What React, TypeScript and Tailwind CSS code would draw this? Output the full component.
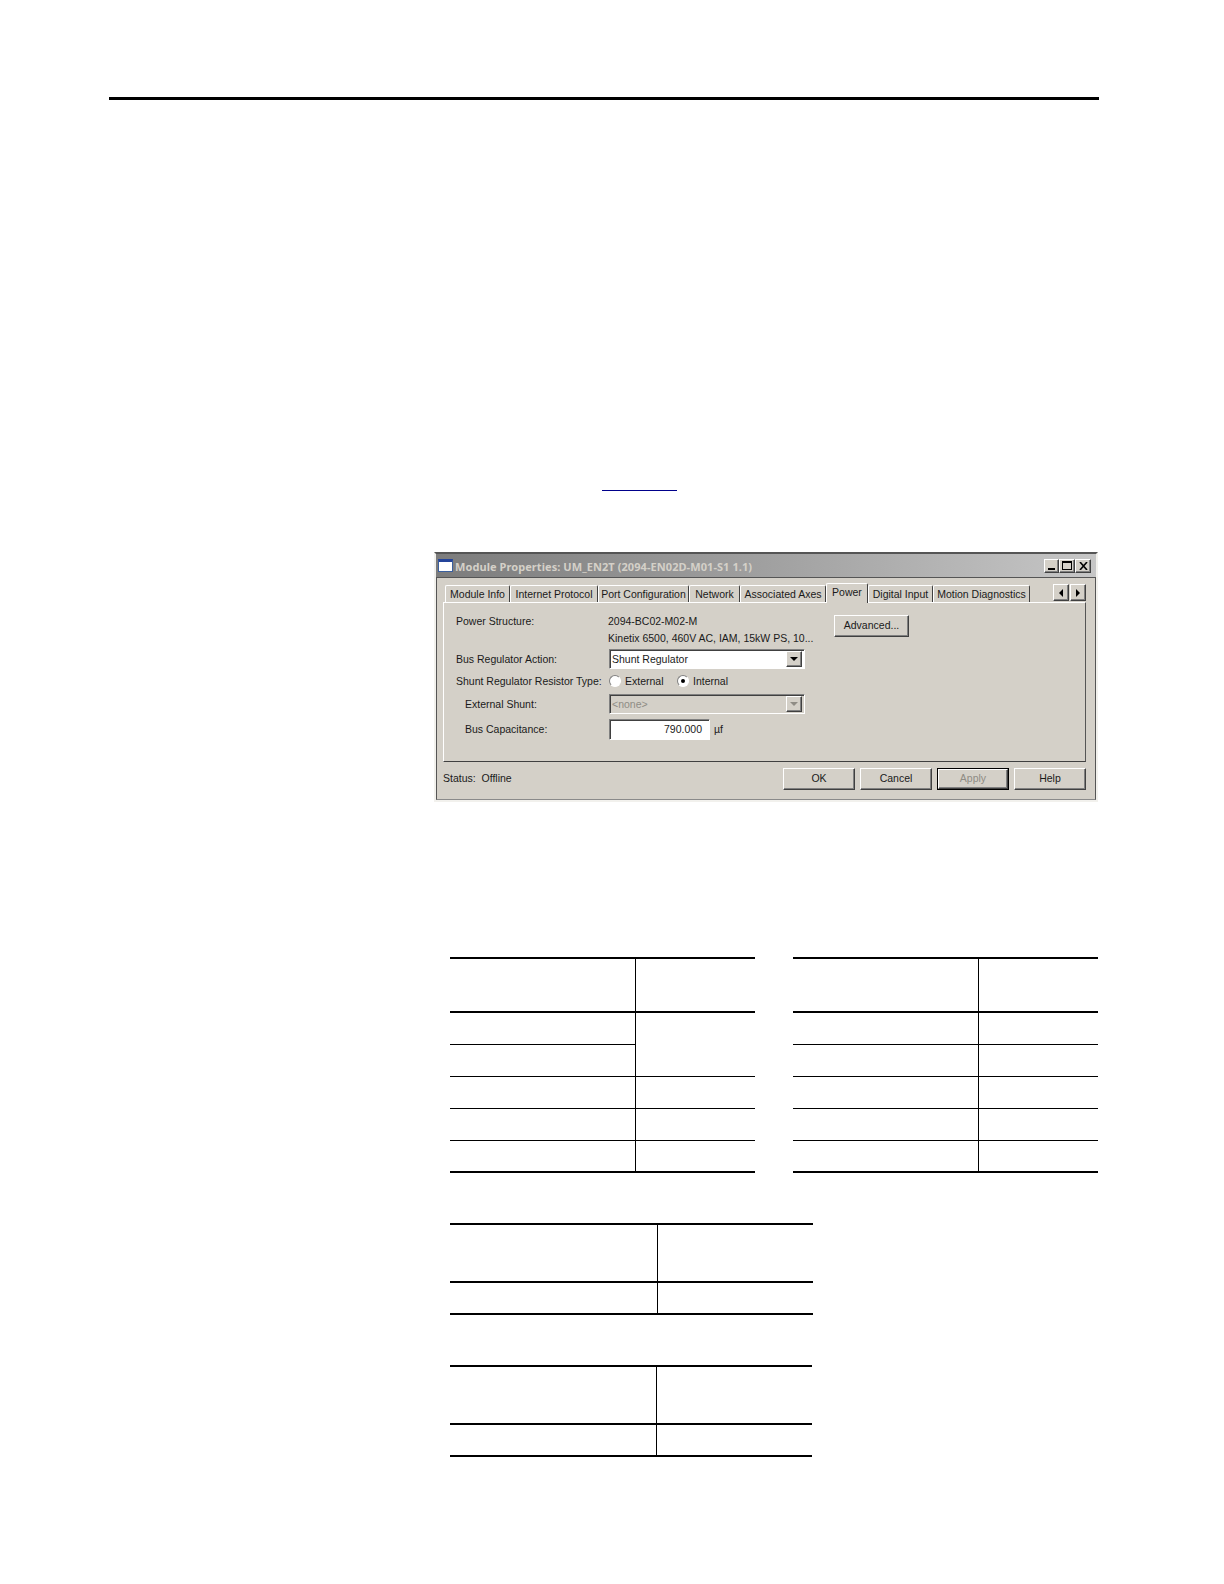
import React from "react";

const raised = "border border-t-white border-l-white border-r-[#404040] border-b-[#404040] shadow-[inset_-1px_-1px_0_#808080]";
const sunken = "border border-t-[#808080] border-l-[#808080] border-r-white border-b-white shadow-[inset_1px_1px_0_#404040]";

function Tri({ dir, color = "#000" }: { dir: "l" | "r" | "d"; color?: string }) {
  const pts = dir === "l" ? "5,0 5,8 1,4" : dir === "r" ? "1,0 1,8 5,4" : "0,1 8,1 4,5";
  const w = dir === "d" ? 8 : 6;
  const h = dir === "d" ? 6 : 8;
  return (
    <svg width={w} height={h} viewBox={`0 0 ${w} ${h}`}>
      <polygon points={pts} fill={color} />
    </svg>
  );
}

function Tab({ label, w, active }: { label: string; w: string; active?: boolean }) {
  return (
    <div
      className={`${w} ${
        active ? "h-[20px] -mb-px bg-[#d4d0c8] z-10 pb-[2px]" : "h-[17px] pt-[1px]"
      } flex items-center justify-center border-t border-l border-r border-t-white border-l-white border-r-[#404040] rounded-t-[2px] whitespace-nowrap`}
    >
      {label}
    </div>
  );
}

function Btn({ label, disabled, def }: { label: string; disabled?: boolean; def?: boolean }) {
  return (
    <div
      className={`w-[72px] h-[22px] flex items-center justify-center ${
        def ? "border border-black" : ""
      }`}
    >
      <div className={`w-full h-full flex items-center justify-center pb-[1px] ${raised} ${disabled ? "text-[#8f8c85]" : ""}`}>
        {label}
      </div>
    </div>
  );
}

function Radio({ on }: { on?: boolean }) {
  return (
    <div className="w-[12px] h-[12px] rounded-full bg-white border border-t-[#808080] border-l-[#808080] border-r-white border-b-white flex items-center justify-center">
      {on && <div className="w-[4px] h-[4px] rounded-full bg-black" />}
    </div>
  );
}

function Select({ value, disabled }: { value: string; disabled?: boolean }) {
  return (
    <div className={`w-[196px] h-[20px] ${sunken} ${disabled ? "bg-[#d4d0c8] text-[#8f8c85]" : "bg-white"} flex items-center justify-between pl-[2px] pr-[2px]`}>
      <span>{value}</span>
      <div className={`w-[16px] h-[16px] bg-[#d4d0c8] ${raised} flex items-center justify-center`}>
        <Tri dir="d" color={disabled ? "#8f8c85" : "#000"} />
      </div>
    </div>
  );
}

function Row({ label, indent, h, mt, children }: { label: string; indent?: boolean; h: string; mt: string; children: React.ReactNode }) {
  return (
    <div className={`flex items-center ${h} ${mt}`}>
      <div className={`w-[153px] whitespace-nowrap ${indent ? "pl-[9px]" : ""}`}>{label}</div>
      {children}
    </div>
  );
}

function Table({
  width,
  split,
  headH,
  rows,
  mergeFirst,
}: {
  width: string;
  split: string;
  headH: string;
  rows: number;
  mergeFirst?: boolean;
}) {
  const cellL = "border-r border-black";
  const items: React.ReactNode[] = [];
  for (let i = 0; i < rows; i++) {
    const last = i === rows - 1;
    const b = last ? "border-b-2 border-black" : "border-b border-black";
    items.push(<div key={`l${i}`} className={`h-[32px] ${b} ${cellL}`} />);
    if (mergeFirst && i === 0) {
      items.push(<div key={`r${i}`} className={`row-span-2 border-b border-black`} />);
    } else if (!(mergeFirst && i === 1)) {
      items.push(<div key={`r${i}`} className={`h-[32px] ${b}`} />);
    }
  }
  return (
    <div className={`${width} grid ${split} border-t-2 border-black`}>
      <div className={`${headH} border-b-2 border-black ${cellL}`} />
      <div className={`${headH} border-b-2 border-black`} />
      {items}
    </div>
  );
}

export default function App() {
  return (
    <div className="w-[1224px] h-[1584px] bg-white overflow-hidden pt-[97px] font-['Liberation_Sans',sans-serif] text-[10.5px] leading-none text-[#1a1a1a]">
      <div className="ml-[109px] w-[990px] h-[3px] bg-black" />
      <div className="ml-[602px] mt-[390px] w-[75px] h-px bg-[#00008b]" />

      <div className="ml-[434px] mt-[61px] w-[664px] h-[250px] bg-[#d4d0c8] border-t-2 border-t-[#555] border-x-2 border-x-[#f2f1ed] border-b-2 border-b-[#f2f1ed] flex flex-col">
        <div className="h-[23px] shrink-0 flex items-center pl-[2px] pr-[5px] bg-gradient-to-r from-[#7c7c7c] to-[#c6c6c6]">
          <div className="w-[15px] h-[13px] bg-white border border-[#3a5f9e] border-t-[3px] border-t-[#24449a]" />
          <span className="ml-[2px] mt-[2px] font-bold tracking-[0.07px] text-[#d4d0c8] whitespace-nowrap font-['Noto_Sans',sans-serif] text-[11px]">Module Properties: UM_EN2T (2094-EN02D-M01-S1 1.1)</span>
          <div className="ml-auto flex">
            <div className={`w-[15px] h-[14px] bg-[#d4d0c8] ${raised} flex items-end justify-center pb-[2px]`}>
              <div className="w-[7px] h-[2px] bg-black" />
            </div>
            <div className={`w-[16px] h-[14px] bg-[#d4d0c8] ${raised} flex items-center justify-center`}>
              <div className="w-[10px] h-[9px] border border-t-2 border-black" />
            </div>
            <div className={`w-[16px] h-[14px] bg-[#d4d0c8] ${raised} flex items-center justify-center`}>
              <svg width="9" height="8" viewBox="0 0 9 8">
                <path d="M1 0L8 8M8 0L1 8" stroke="#000" strokeWidth="1.6" />
              </svg>
            </div>
          </div>
        </div>

        <div className="flex-1 border border-t-[#555] border-x-[#555] border-b-[#8a8a8a] pl-[6px] pr-[8px] pt-[5px] flex flex-col">
          <div className="h-[19px] flex items-end pl-[2px] relative">
            <Tab label="Module Info" w="w-[65px]" />
            <Tab label="Internet Protocol" w="w-[88px]" />
            <Tab label="Port Configuration" w="w-[91px]" />
            <Tab label="Network" w="w-[51px]" />
            <Tab label="Associated Axes" w="w-[86px]" />
            <Tab label="Power" w="w-[42px]" active />
            <Tab label="Digital Input" w="w-[65px]" />
            <Tab label="Motion Diagnostics" w="w-[97px]" />
            <div className="ml-auto flex self-start mt-[1px] mr-[1px] gap-px">
              <div className={`w-[16px] h-[17px] bg-[#d4d0c8] ${raised} flex items-center justify-center`}>
                <Tri dir="l" />
              </div>
              <div className={`w-[16px] h-[17px] bg-[#d4d0c8] ${raised} flex items-center justify-center`}>
                <Tri dir="r" />
              </div>
            </div>
          </div>

          <div className="w-[643px] h-[160px] shrink-0 border border-t-white border-l-white border-r-[#555] border-b-[#404040] pl-[12px] pt-[10px] flex">
            <div className="w-[378px] shrink-0">
              <Row label="Power Structure:" h="h-[17px]" mt="">
                <span className="-ml-[1px]">2094-BC02-M02-M</span>
              </Row>
              <Row label="" h="h-[16px]" mt="">
                <span className="-ml-[1px] whitespace-nowrap">Kinetix 6500, 460V AC, IAM, 15kW PS, 10...</span>
              </Row>
              <Row label="Bus Regulator Action:" h="h-[20px]" mt="mt-[3px]">
                <Select value="Shunt Regulator" />
              </Row>
              <Row label="Shunt Regulator Resistor Type:" h="h-[16px]" mt="mt-[4px]">
                <div className="flex items-center">
                  <Radio />
                  <span className="ml-[4px] w-[52px]">External</span>
                  <Radio on />
                  <span className="ml-[4px]">Internal</span>
                </div>
              </Row>
              <Row label="External Shunt:" indent h="h-[20px]" mt="mt-[5px]">
                <Select value="<none>" disabled />
              </Row>
              <Row label="Bus Capacitance:" indent h="h-[21px]" mt="mt-[5px]">
                <div className={`w-[101px] h-[21px] bg-white ${sunken} flex items-center justify-end pr-[7px] pb-[1px]`}>790.000</div>
                <span className="ml-[4px]">µf</span>
              </Row>
            </div>
            <div className={`w-[75px] h-[22px] mt-[2px] flex items-center justify-center pb-[1px] ${raised}`}>Advanced...</div>
          </div>

          <div className="mt-[6px] w-[643px] flex items-center justify-between">
            <span className="whitespace-nowrap pb-[1px]">Status:&nbsp; Offline</span>
            <div className="flex gap-[5px]">
              <Btn label="OK" />
              <Btn label="Cancel" />
              <Btn label="Apply" disabled def />
              <Btn label="Help" />
            </div>
          </div>
        </div>
      </div>

      <div className="ml-[450px] mt-[155px] flex gap-[38px]">
        <Table width="w-[305px]" split="grid-cols-[186px_1fr]" headH="h-[54px]" rows={5} mergeFirst />
        <Table width="w-[305px]" split="grid-cols-[186px_1fr]" headH="h-[54px]" rows={5} />
      </div>
      <div className="ml-[450px] mt-[50px]">
        <Table width="w-[363px]" split="grid-cols-[208px_1fr]" headH="h-[58px]" rows={1} />
      </div>
      <div className="ml-[450px] mt-[50px]">
        <Table width="w-[362px]" split="grid-cols-[207px_1fr]" headH="h-[58px]" rows={1} />
      </div>
    </div>
  );
}
